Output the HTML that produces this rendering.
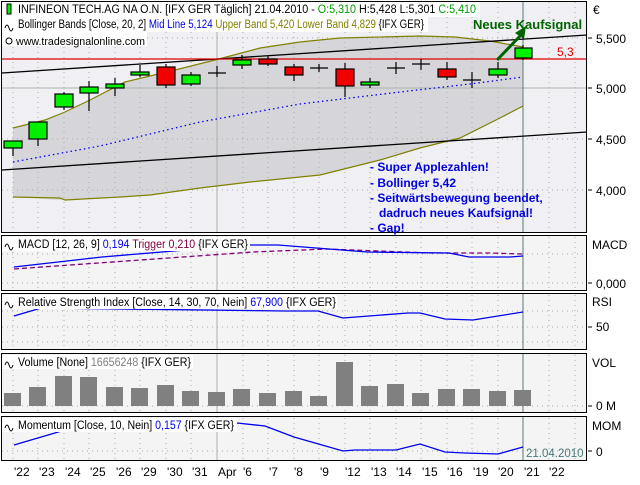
<!DOCTYPE html>
<html><head><meta charset="utf-8"><style>
body{margin:0;background:#fff;width:640px;height:480px;overflow:hidden;font-family:"Liberation Sans",sans-serif}
svg text{font-family:"Liberation Sans",sans-serif}
</style></head><body>
<svg width="640" height="480" viewBox="0 0 640 480" xmlns="http://www.w3.org/2000/svg">
<rect width="640" height="480" fill="#fff"/>
<rect x="1.5" y="1.5" width="585" height="231" fill="#f4f4f4" stroke="#000"/>
<rect x="2" y="2" width="521" height="230" fill="#f0f0f4"/>
<rect x="523" y="2" width="63" height="230" fill="#f0f0f4"/>
<path d="M13,128 L45,120 L65,112 L90,100 L125,82 L175,70 L215,60 L260,48 L300,42 L340,38 L420,36 L455,37 L490,41 L523,47 L523,106 L500,118 L460,138 L420,148 L380,160 L320,175 L250,182 L200,188 L150,195 L120,197 L95,199 L60,200 L13,197 Z" fill="#d6d6da"/>
<g stroke="#aaa" stroke-dasharray="1,4">
<path d="M13,2V232M38,2V232M64,2V232M89,2V232M115,2V232M140,2V232M166,2V232M191,2V232M243,2V232M268,2V232M294,2V232M319,2V232M345,2V232M370,2V232M396,2V232M421,2V232M447,2V232M472,2V232M498,2V232M549,2V232M575,2V232"/>
<path d="M2,139H586M2,190H586M2,38H586"/>
</g>
<path d="M2,88H586M217,2V232" stroke="#a8b4a8"/>
<path d="M523,2V232" stroke="#5a7a7a"/>
<path d="M13,128 L45,120 L65,112 L90,100 L125,82 L175,70 L215,60 L260,48 L300,42 L340,38 L420,36 L455,37 L490,41 L523,47" fill="none" stroke="#808000" stroke-width="1.2"/>
<path d="M13,197 L60,198 L65,200 L120,197 L150,195 L200,188 L250,182 L320,175 L380,160 L420,148 L460,138 L500,118 L523,106" fill="none" stroke="#808000" stroke-width="1.2"/>
<path d="M13,162 L100,146 L200,122 L300,104 L400,92 L470,84 L523,77" fill="none" stroke="#0000ee" stroke-dasharray="1.5,3" stroke-width="1.3"/>
<path d="M2,73 L587,35" stroke="#000" stroke-width="1.3"/>
<path d="M2,170 L587,132" stroke="#000" stroke-width="1.3"/>
<path d="M2,59H586" stroke="#e00000" stroke-width="1.2"/>
<text x="557" y="56" font-size="12" fill="#e00000">5,3</text>
<g stroke="#000" stroke-width="1.2">
<path d="M13,148V156M38,139V146M64,92V110M89,81V111M115,78V96M140,65V77M166,64V88M191,72V86M217,66V77M242,55V69M268,56V66M294,64V81M319,64V72M345,63V97M370,78V88M396,62V74M421,59V70M447,62V80M472,72V88M498,62V78M523,45V60"/>
<rect x="4" y="141" width="18" height="7" fill="#00f000"/>
<rect x="29" y="122" width="18" height="17" fill="#00f000"/>
<rect x="55" y="94" width="18" height="13" fill="#00f000"/>
<rect x="80" y="87" width="18" height="6" fill="#00f000"/>
<rect x="106" y="84" width="18" height="4" fill="#00f000"/>
<rect x="131" y="72" width="18" height="3" fill="#00f000"/>
<rect x="157" y="67" width="18" height="18" fill="#f00000"/>
<rect x="182" y="75" width="18" height="9" fill="#00f000"/>
<path d="M208,73H226"/>
<rect x="233" y="60" width="18" height="5" fill="#00f000"/>
<rect x="259" y="59" width="18" height="5" fill="#f00000"/>
<rect x="285" y="67" width="18" height="8" fill="#f00000"/>
<path d="M310,68H328"/>
<rect x="336" y="69" width="18" height="17" fill="#f00000"/>
<rect x="361" y="82" width="18" height="3" fill="#00f000"/>
<path d="M387,68H405M412,64H430"/>
<rect x="438" y="69" width="18" height="8" fill="#f00000"/>
<path d="M463,80H481"/>
<rect x="489" y="69" width="18" height="6" fill="#00f000"/>
<rect x="515" y="48" width="17" height="10" fill="#00f000"/>
</g>
<path d="M497,60 L523,33" stroke="#006400" stroke-width="3"/>
<path d="M526,26 L515,33 L524,39 Z" fill="#006400"/>
<g font-size="12" font-weight="bold" fill="#0000e0">
<text x="370" y="171">- Super Applezahlen!</text>
<text x="370" y="187">- Bollinger 5,42</text>
<text x="370" y="202">- Seitwärtsbewegung beendet,</text>
<text x="379" y="217">dadruch neues Kaufsignal!</text>
<text x="370" y="232">- Gap!</text>
</g>
<rect x="2" y="2" width="478" height="15" fill="#fff"/>
<rect x="2" y="17" width="426" height="15" fill="#fff"/>
<rect x="2" y="32" width="145" height="14" fill="#fff"/>
<text x="473" y="29" font-size="13" font-weight="bold" fill="#006400">Neues Kaufsignal</text>
<rect x="7" y="4" width="4" height="10" fill="#00f000" stroke="#000"/>
<g font-size="11.5">
<text x="18" y="13" textLength="458" lengthAdjust="spacingAndGlyphs">INFINEON TECH.AG NA O.N. [IFX GER  Täglich] 21.04.2010 - <tspan fill="#00a000">O:5,310</tspan> H:5,428 L:5,301 <tspan fill="#00a000">C:5,410</tspan></text>
<text x="18" y="28" textLength="406" lengthAdjust="spacingAndGlyphs">Bollinger Bands [Close, 20, 2] <tspan fill="#0000ee">Mid Line 5,124</tspan> <tspan fill="#808000">Upper Band 5,420 Lower Band 4,829</tspan> {IFX GER}</text>
<text x="16" y="45" font-size="11" textLength="129" lengthAdjust="spacingAndGlyphs">www.tradesignalonline.com</text>
</g>
<path d="M5,28 q2,-6 4,0 q2,6 4,0" fill="none" stroke="#000"/>
<circle cx="9" cy="41" r="3" fill="none" stroke="#000"/>
<g font-size="12">
<text x="593" y="14">€</text>
<text x="596" y="43">5,500</text><text x="596" y="93">5,000</text><text x="596" y="144">4,500</text><text x="596" y="195">4,000</text>
</g>
<path d="M588,38h4M588,88h4M588,139h4M588,190h4" stroke="#000"/>

<rect x="1.5" y="235.5" width="585" height="55" fill="#f4f4f4" stroke="#000"/>
<g stroke="#aaa" stroke-dasharray="1,4"><path d="M13,237V290M38,237V290M64,237V290M89,237V290M115,237V290M140,237V290M166,237V290M191,237V290M243,237V290M268,237V290M294,237V290M319,237V290M345,237V290M370,237V290M396,237V290M421,237V290M447,237V290M472,237V290M498,237V290M549,237V290M575,237V290M2,283H586M2,254H586"/></g>
<path d="M217,236V290" stroke="#a8b4a8"/><path d="M523,236V290" stroke="#5a7a7a"/>
<path d="M14,269 L253,252 L327,249 L429,253 L490,253 L522,254" fill="none" stroke="#800080" stroke-dasharray="5,3" stroke-width="1.3"/>
<path d="M14,267 L102,257 L245,245 L278,245 L367,252 L449,253 L469,257 L510,257 L523,256" fill="none" stroke="#0000ee" stroke-width="1.3"/>
<rect x="2" y="237" width="248" height="14" fill="#fff"/>
<text x="18" y="248" font-size="11.5" textLength="230" lengthAdjust="spacingAndGlyphs">MACD [12, 26, 9] <tspan fill="#0000ee">0,194</tspan> <tspan fill="#800040">Trigger 0,210</tspan> {IFX GER}</text>
<path d="M5,247 q2,-6 4,0 q2,6 4,0" fill="none" stroke="#000"/>
<text x="592" y="249" font-size="12">MACD</text><text x="596" y="288" font-size="12">0,000</text>
<path d="M588,283h4" stroke="#000"/>

<rect x="1.5" y="293.5" width="585" height="56" fill="#f4f4f4" stroke="#000"/>
<g stroke="#aaa" stroke-dasharray="1,4"><path d="M13,295V349M38,295V349M64,295V349M89,295V349M115,295V349M140,295V349M166,295V349M191,295V349M243,295V349M268,295V349M294,295V349M319,295V349M345,295V349M370,295V349M396,295V349M421,295V349M447,295V349M472,295V349M498,295V349M549,295V349M575,295V349M2,311H586M2,327H586M2,342H586"/></g>
<path d="M217,294V349" stroke="#a8b4a8"/><path d="M523,294V349" stroke="#5a7a7a"/>
<path d="M14,316 L41,308 L286,311 L318,311 L343,318 L408,313 L420,313 L445,319 L473,320 L523,312" fill="none" stroke="#0000ee" stroke-width="1.3"/>
<rect x="2" y="295" width="335" height="14" fill="#fff"/>
<text x="18" y="306" font-size="11.5" textLength="318" lengthAdjust="spacingAndGlyphs">Relative Strength Index [Close, 14, 30, 70, Nein] <tspan fill="#0000ee">67,900</tspan> {IFX GER}</text>
<path d="M5,305 q2,-6 4,0 q2,6 4,0" fill="none" stroke="#000"/>
<text x="592" y="306" font-size="12">RSI</text><text x="596" y="331" font-size="12">50</text>
<path d="M588,327h4" stroke="#000"/>

<rect x="1.5" y="353.5" width="585" height="59" fill="#f4f4f4" stroke="#000"/>
<g stroke="#aaa" stroke-dasharray="1,4"><path d="M13,355V412M38,355V412M64,355V412M89,355V412M115,355V412M140,355V412M166,355V412M191,355V412M243,355V412M268,355V412M294,355V412M319,355V412M345,355V412M370,355V412M396,355V412M421,355V412M447,355V412M472,355V412M498,355V412M549,355V412M575,355V412M2,406H586"/></g>
<path d="M217,354V412" stroke="#a8b4a8"/><path d="M523,354V412" stroke="#5a7a7a"/>
<g fill="#808080">
<rect x="4" y="393" width="17" height="13"/><rect x="29" y="387" width="17" height="19"/><rect x="55" y="376" width="17" height="30"/><rect x="80" y="377" width="17" height="29"/><rect x="106" y="387" width="17" height="19"/><rect x="131" y="388" width="17" height="18"/><rect x="157" y="385" width="17" height="21"/><rect x="182" y="391" width="17" height="15"/><rect x="208" y="392" width="17" height="14"/><rect x="233" y="389" width="17" height="17"/><rect x="259" y="393" width="17" height="13"/><rect x="285" y="391" width="17" height="15"/><rect x="310" y="396" width="17" height="10"/><rect x="336" y="362" width="17" height="44"/><rect x="361" y="386" width="17" height="20"/><rect x="387" y="384" width="17" height="22"/><rect x="412" y="393" width="17" height="13"/><rect x="438" y="389" width="17" height="17"/><rect x="463" y="389" width="17" height="17"/><rect x="489" y="391" width="17" height="15"/><rect x="514" y="390" width="17" height="16"/>
</g>
<rect x="2" y="355" width="191" height="14" fill="#fff"/>
<text x="18" y="366" font-size="11.5" textLength="173" lengthAdjust="spacingAndGlyphs">Volume [None] <tspan fill="#808080">16656248</tspan> {IFX GER}</text>
<path d="M5,365 q2,-6 4,0 q2,6 4,0" fill="none" stroke="#000"/>
<text x="592" y="367" font-size="12">VOL</text><text x="596" y="410" font-size="12">0 M</text>
<path d="M588,406h4" stroke="#000"/>

<rect x="1.5" y="416.5" width="585" height="44" fill="#f4f4f4" stroke="#000"/>
<g stroke="#aaa" stroke-dasharray="1,4"><path d="M13,418V460M38,418V460M64,418V460M89,418V460M115,418V460M140,418V460M166,418V460M191,418V460M243,418V460M268,418V460M294,418V460M319,418V460M345,418V460M370,418V460M396,418V460M421,418V460M447,418V460M472,418V460M498,418V460M549,418V460M575,418V460M2,451H586"/></g>
<path d="M217,417V460" stroke="#a8b4a8"/><path d="M523,417V460" stroke="#5a7a7a"/>
<path d="M14,445 L65,430 L237,423 L265,426 L294,437 L343,451 L355,450 L396,450 L420,444 L445,452 L465,453 L498,454 L523,447" fill="none" stroke="#0000ee" stroke-width="1.3"/>
<rect x="2" y="418" width="235" height="14" fill="#fff"/>
<text x="18" y="429" font-size="11.5" textLength="216" lengthAdjust="spacingAndGlyphs">Momentum [Close, 10, Nein] <tspan fill="#0000ee">0,157</tspan> {IFX GER}</text>
<path d="M5,428 q2,-6 4,0 q2,6 4,0" fill="none" stroke="#000"/>
<text x="526" y="457" font-size="11.5" fill="#4a7a7a">21.04.2010</text>
<text x="592" y="430" font-size="12">MOM</text><text x="596" y="456" font-size="12">0</text>
<path d="M588,451h4" stroke="#000"/>

<g font-size="12">
<text x="14" y="476">'22</text><text x="39" y="476">'23</text><text x="65" y="476">'24</text><text x="90" y="476">'25</text><text x="116" y="476">'26</text><text x="141" y="476">'29</text><text x="167" y="476">'30</text><text x="192" y="476">'31</text><text x="218" y="476">Apr</text><text x="243" y="476">'6</text><text x="269" y="476">'7</text><text x="294" y="476">'8</text><text x="320" y="476">'9</text><text x="345" y="476">'12</text><text x="371" y="476">'13</text><text x="396" y="476">'14</text><text x="422" y="476">'15</text><text x="447" y="476">'16</text><text x="473" y="476">'19</text><text x="498" y="476">'20</text><text x="524" y="476">'21</text><text x="549" y="476">'22</text>
</g>
</svg>
</body></html>
